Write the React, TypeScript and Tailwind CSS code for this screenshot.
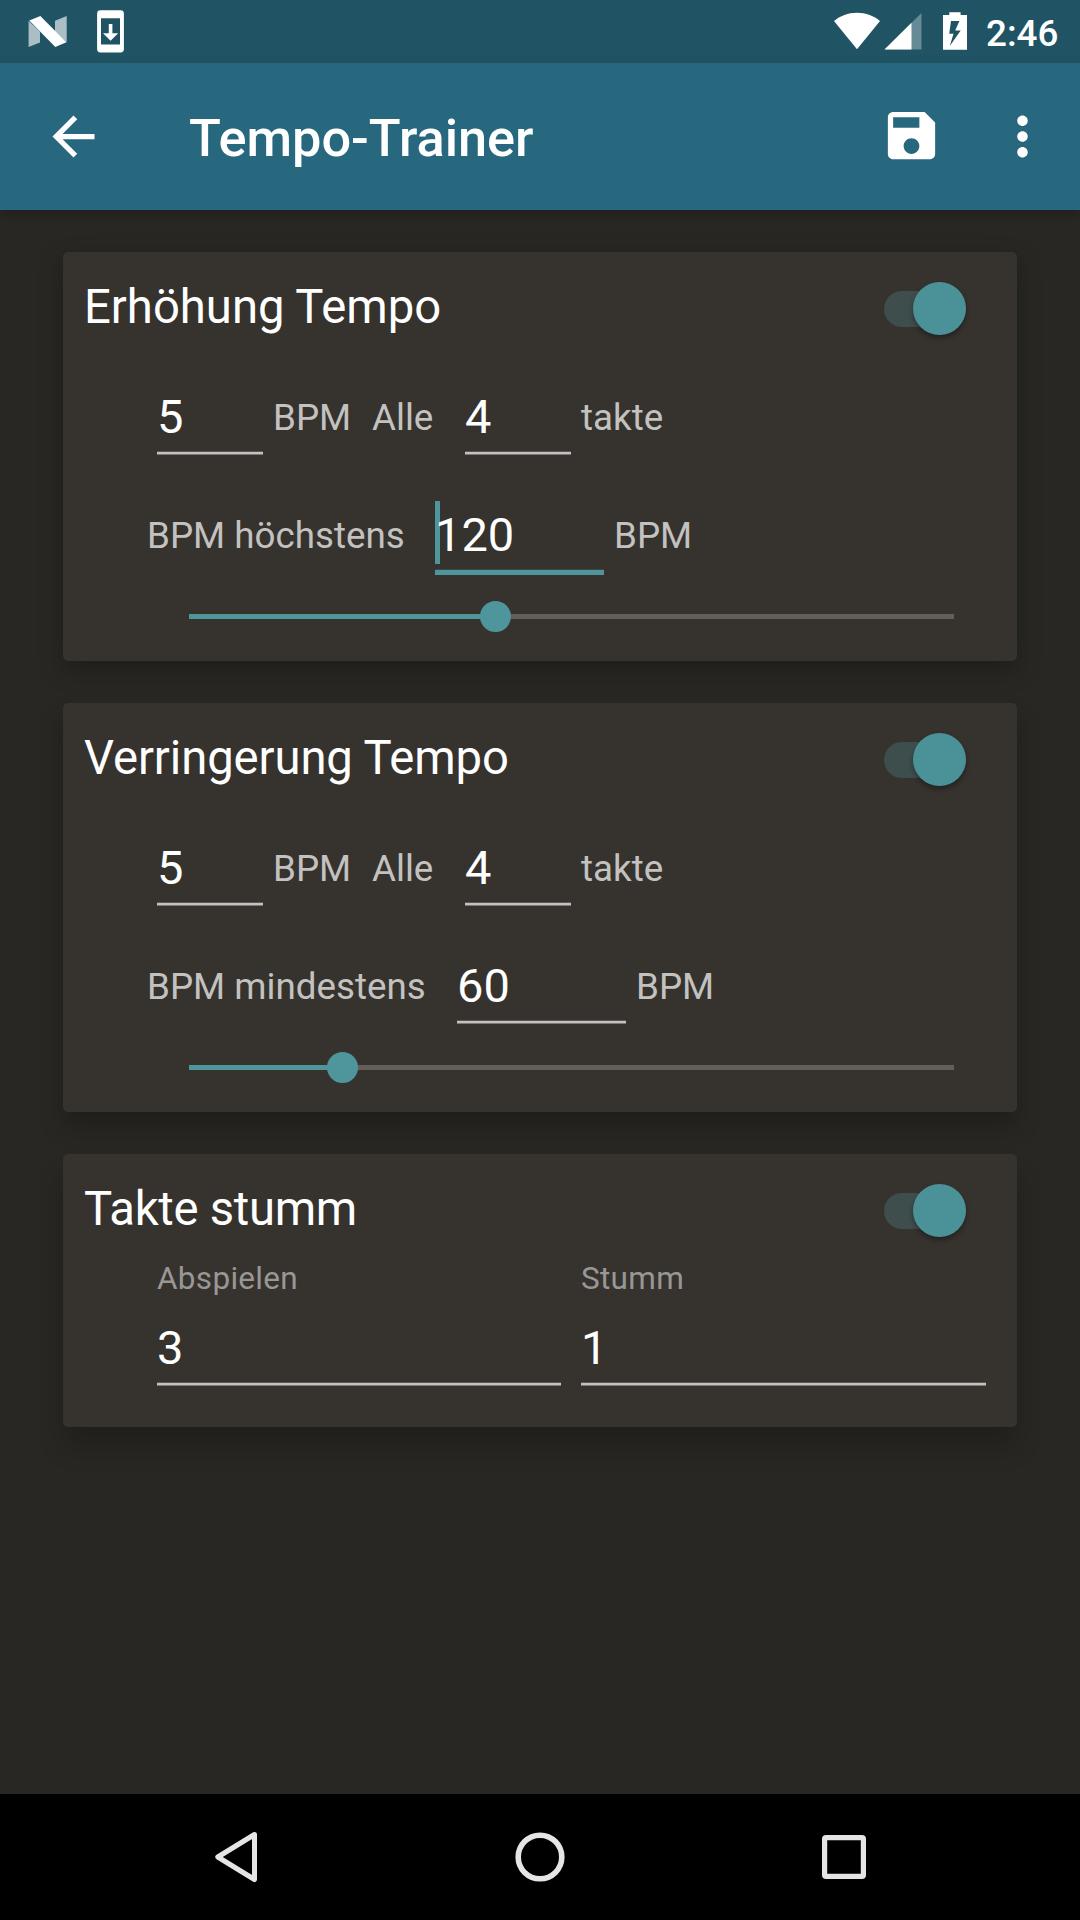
import { useState } from 'react';
import clsx from 'clsx';

function StatusBar() {
  return (
    <div className="flex h-[63px] items-start bg-[#205465] text-white">
      <svg className="h-[63px] w-[140px]" viewBox="0 0 140 63" fill="currentColor">
        <path d="M28.6 20.8V47l11.4-4.6V31.8zM66.7 16 55 20.8v10.7l11.7 11z" opacity=".62" />
        <path d="M29.3 20.6 40.3 16 66.4 42.3 55.3 47z" />
        <path
          fillRule="evenodd"
          d="M100.5 10.3h20a3.4 3.4 0 0 1 3.4 3.4v35.4a3.4 3.4 0 0 1-3.4 3.4h-20a3.4 3.4 0 0 1-3.4-3.4V13.7a3.4 3.4 0 0 1 3.4-3.4zM101 18.2v26.4h19V18.2z"
        />
        <path d="M108.8 24h3.6v9.2h5.8l-7.6 7.6-7.6-7.6h5.8z" />
      </svg>
      <svg className="ml-auto h-[63px] w-[156px]" viewBox="830 0 156 63" fill="currentColor">
        <path d="M857 49.2 834 21c6-4.9 14-8.2 23-8.2s17 3.3 23 8.2z" />
        <path d="M884.5 49.5 921.5 13v36.5z" opacity=".32" />
        <path d="M884.5 49.5 911.5 22.7v26.8z" />
        <path
          fillRule="evenodd"
          d="M949.3 12.2h11.3v2.8h6.4v34.8h-24V15h6.3zM951 21l-1.8 12.7h4.3L949.8 46l10.9-15.5h-5.5l4.2-9.5z"
        />
      </svg>
      <span className="mr-[21px] w-[73px] text-[36.75px] leading-[67px] font-medium">2:46</span>
    </div>
  );
}

function AppBar() {
  return (
    <header className="relative flex h-[147px] items-center bg-[#27687f] pl-[42px] text-white shadow-[0_4px_10px_rgba(0,0,0,0.22)]">
      <svg className="size-[63px]" viewBox="0 0 24 24" fill="currentColor">
        <path d="M20 11H7.83l5.59-5.59L12 4l-8 8 8 8 1.41-1.41L7.83 13H20v-2z" />
      </svg>
      <h1 className="ml-[84px] pt-[3px] text-[52.3px] leading-[60px] font-medium">Tempo-Trainer</h1>
      <svg className="mb-[2px] ml-auto size-[63px]" viewBox="0 0 24 24" fill="currentColor">
        <path d="M17 3H5c-1.11 0-2 .9-2 2v14c0 1.1.89 2 2 2h14c1.1 0 2-.9 2-2V7l-4-4zm-5 16c-1.66 0-3-1.34-3-3s1.34-3 3-3 3 1.34 3 3-1.34 3-3 3zm3-10H5V5h10v4z" />
      </svg>
      <svg className="mr-[26px] ml-[48px] size-[63px]" viewBox="0 0 24 24" fill="currentColor">
        <path d="M12 8c1.1 0 2-.9 2-2s-.9-2-2-2-2 .9-2 2 .9 2 2 2zm0 2c-1.1 0-2 .9-2 2s.9 2 2 2 2-.9 2-2-.9-2-2-2zm0 6c-1.1 0-2 .9-2 2s.9 2 2 2 2-.9 2-2-.9-2-2-2z" />
      </svg>
    </header>
  );
}

function Toggle() {
  const [on, setOn] = useState(true);
  return (
    <button
      role="switch"
      aria-checked={on}
      onClick={() => setOn(!on)}
      className={clsx('flex h-[36px] w-[82px] items-center rounded-full bg-[#3e4e4c]', on && 'justify-end')}
    >
      <span className="mb-[1px] size-[53px] shrink-0 rounded-full bg-[#4b9198] shadow-[0_3px_5px_rgba(0,0,0,0.35)]" />
    </button>
  );
}

type CardProps = {
  title: string;
  titleClass?: string;
  shadow: string;
  children: React.ReactNode;
};

function Card({ title, titleClass, shadow, children }: CardProps) {
  return (
    <section className={clsx('rounded-[5px] bg-[#36322e]', shadow)}>
      <div className="flex h-[111px] items-center justify-between pr-[51px] pl-[21px]">
        <h2 className={clsx('pb-[2px] text-[47.25px] leading-[56px] text-white', titleClass)}>{title}</h2>
        <div className="pt-[3px]">
          <Toggle />
        </div>
      </div>
      {children}
    </section>
  );
}

function Field({ value, className, focused }: { value: string; className: string; focused?: boolean }) {
  return (
    <div className={clsx('relative h-[76px] pt-[4px]', className)}>
      {focused && <span className="absolute top-[4px] left-0 h-[63px] w-[5px] bg-[#4e959c]" />}
      <div className="relative text-[47px] leading-[68px] text-white">{value}</div>
      {focused ? (
        <div className="h-[6px] border-t border-[#3c4644] bg-[#4e959c]" />
      ) : (
        <div className="h-[4px] border-y border-t-[#5b5753] border-b-[#7b7875] bg-[#c3c2c1]" />
      )}
    </div>
  );
}

function Slider({ percent }: { percent: number }) {
  return (
    <div className="relative mt-[27px] mr-[63px] ml-[126px] flex h-[33px] items-center">
      <div className="h-[5px] w-full bg-[#625f5a]">
        <div className="h-full bg-[#4e959c]" style={{ width: `${percent}%` }} />
      </div>
      <div
        className="absolute top-[1px] size-[31px] -translate-x-[15px] rounded-full bg-[#4e959c]"
        style={{ left: `${percent}%` }}
      />
    </div>
  );
}

type TempoCardProps = {
  title: string;
  titleClass?: string;
  shadow: string;
  limitLabel: string;
  limitWidth: string;
  limit: string;
  percent: number;
  focused?: boolean;
};

function TempoCard({ title, titleClass, shadow, limitLabel, limitWidth, limit, percent, focused }: TempoCardProps) {
  return (
    <Card title={title} titleClass={titleClass} shadow={shadow}>
      <div className="pt-[16px] pb-[28px] text-[36.75px] leading-[77px] text-[#c3c2c0]">
        <div className="flex h-[76px] pl-[94px]">
          <Field value="5" className="w-[106px]" />
          <span className="ml-[10px] w-[99px]">BPM</span>
          <span className="w-[93px]">Alle</span>
          <Field value="4" className="w-[106px]" />
          <span className="ml-[10px]">takte</span>
        </div>
        <div className="mt-[42px] flex h-[76px] pl-[84px]">
          <span className={limitWidth}>{limitLabel}</span>
          <Field value={limit} className="w-[169px]" focused={focused} />
          <span className="ml-[10px]">BPM</span>
        </div>
        <Slider percent={percent} />
      </div>
    </Card>
  );
}

function MuteCard() {
  return (
    <Card title="Takte stumm" titleClass="tracking-[-0.3px]" shadow="shadow-[0_20px_26px_rgba(0,0,0,0.2)]">
      <div className="flex gap-[20px] pr-[31px] pb-[41px] pl-[94px] text-[31.5px] leading-[26px] text-[#999795]">
        <div className="w-[404px]">
          <div className="mb-[18px] pt-[1px] tracking-[0.3px]">Abspielen</div>
          <Field value="3" className="w-full" />
        </div>
        <div className="flex-1">
          <div className="mb-[18px] pt-[1px] tracking-[0.3px]">Stumm</div>
          <Field value="1" className="w-full" />
        </div>
      </div>
    </Card>
  );
}

function NavBar() {
  return (
    <nav className="flex h-[126px] items-center justify-between bg-black px-[206px] text-[#e5e5e5]">
      <svg className="size-[60px]" viewBox="206 1827 60 60" fill="none" stroke="currentColor" strokeWidth="5" strokeLinejoin="round">
        <path d="M254.5 1834.5 217.8 1857l36.7 22.5z" />
      </svg>
      <svg className="size-[60px]" viewBox="0 0 60 60" fill="none" stroke="currentColor" strokeWidth="5.6">
        <circle cx="30" cy="30" r="21.8" />
      </svg>
      <svg className="size-[60px]" viewBox="0 0 60 60" fill="none" stroke="currentColor" strokeWidth="5.2">
        <rect x="10.6" y="10.6" width="38.8" height="38.8" rx="1.5" />
      </svg>
    </nav>
  );
}

export default function App() {
  return (
    <div className="flex h-[1920px] w-[1080px] flex-col bg-[#282723] font-[Roboto,sans-serif]">
      <StatusBar />
      <AppBar />
      <main className="flex flex-1 flex-col gap-[42px] px-[63px] pt-[42px]">
        <TempoCard
          title="Erhöhung Tempo"
          shadow="shadow-[0_8px_24px_rgba(0,0,0,0.27)]"
          limitLabel="BPM höchstens"
          limitWidth="w-[288px]"
          limit="120"
          percent={40}
          focused
        />
        <TempoCard
          title="Verringerung Tempo"
          titleClass="tracking-[-0.1px]"
          shadow="shadow-[0_14px_24px_rgba(0,0,0,0.24)]"
          limitLabel="BPM mindestens"
          limitWidth="w-[310px]"
          limit="60"
          percent={20}
        />
        <MuteCard />
      </main>
      <NavBar />
    </div>
  );
}
